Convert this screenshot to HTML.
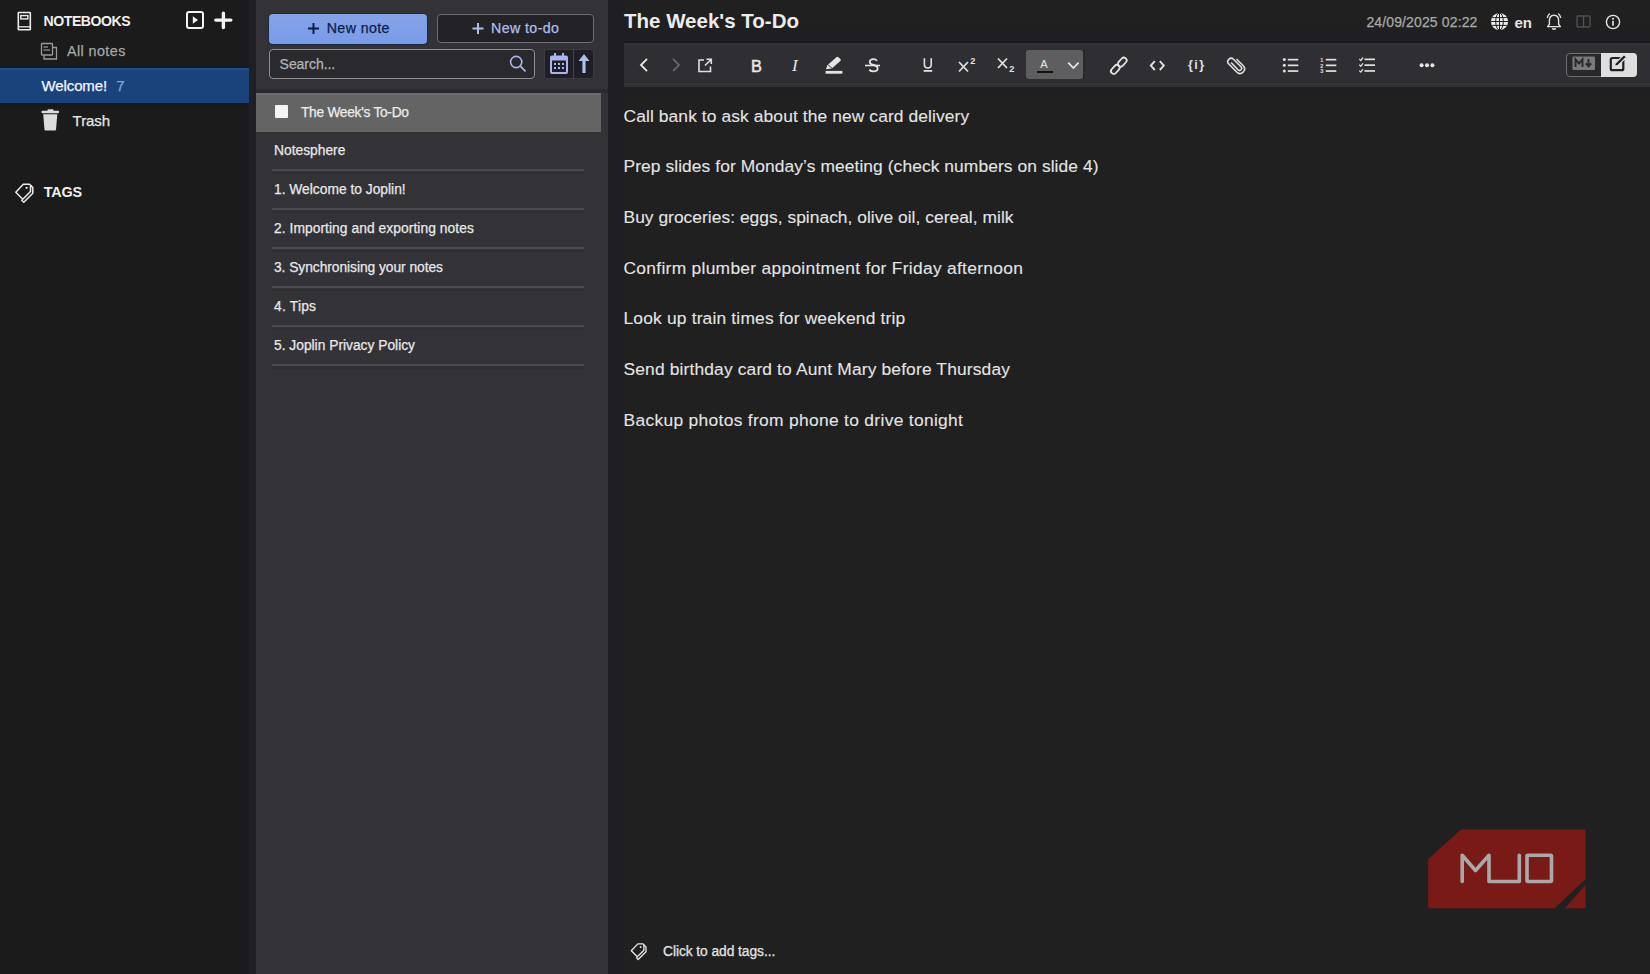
<!DOCTYPE html>
<html><head><meta charset="utf-8"><title>Joplin</title>
<style>
html,body{margin:0;padding:0;width:1650px;height:974px;overflow:hidden;background:#202020;}
body{position:relative;font-family:'Liberation Sans',sans-serif;}
.t{position:absolute;white-space:nowrap;line-height:1;}
.r{position:absolute;display:block;}
</style></head><body>
<div class="r" style="left:0px;top:0px;width:240px;height:974px;background:#1b1b1b;"></div>
<div class="r" style="left:240px;top:0px;width:9px;height:974px;background:#1b1a1f;"></div>
<div class="r" style="left:249px;top:0px;width:7px;height:974px;background:#201f24;"></div>
<div class="r" style="left:256px;top:0px;width:352px;height:974px;background:#333237;"></div>
<div class="r" style="left:608px;top:0px;width:16px;height:974px;background:#1f1e23;"></div>
<div class="r" style="left:624px;top:0px;width:1026px;height:974px;background:#202020;"></div>
<div class="r" style="left:624px;top:22px;width:1026px;height:19px;background:linear-gradient(#202020,#1f1e23);"></div>
<svg class="r" style="left:16px;top:11px;" width="16" height="20" viewBox="0 0 16 20"><rect x="2.3" y="1.5" width="12" height="17.3" rx="0.6" fill="none" stroke="#ececec" stroke-width="1.6"/><rect x="4.8" y="4.6" width="7" height="3.3" fill="none" stroke="#ececec" stroke-width="1.4"/><line x1="2.5" y1="15.8" x2="14" y2="15.8" stroke="#ececec" stroke-width="1.3"/></svg>
<div class="t" style="left:43.60px;top:13.66px;font-size:14.1px;color:#f0f0f0;font-weight:700;letter-spacing:-0.48px;font-family:'Liberation Sans', sans-serif;">NOTEBOOKS</div>
<svg class="r" style="left:185px;top:10px;" width="20" height="20" viewBox="0 0 20 20"><rect x="2" y="2" width="16" height="16" rx="2" fill="none" stroke="#f2f2f2" stroke-width="2"/><path d="M7.8 6.2 L13 10 L7.8 13.8 Z" fill="#f2f2f2"/></svg>
<svg class="r" style="left:213px;top:10px;" width="20" height="20" viewBox="0 0 20 20"><path d="M10.4 3.3 V17.6 M2.8 10.1 H17.8" stroke="#f4f4f4" stroke-width="3.4" stroke-linecap="round"/></svg>
<svg class="r" style="left:40px;top:42px;" width="20" height="19" viewBox="0 0 20 19"><rect x="1.5" y="1.5" width="11" height="11.5" rx="0.5" fill="none" stroke="#9a9a9a" stroke-width="1.3"/><path d="M4 13.5 V17 H16.5 V5.5 H13" fill="none" stroke="#9a9a9a" stroke-width="1.3"/><line x1="3.5" y1="5" x2="8" y2="5" stroke="#9a9a9a" stroke-width="1.2"/><line x1="3.5" y1="8" x2="10" y2="8" stroke="#9a9a9a" stroke-width="1.2"/></svg>
<div class="t" style="left:67.00px;top:44.40px;font-size:14.3px;color:#a8a8a8;font-weight:400;letter-spacing:0.432px;font-family:'Liberation Sans', sans-serif;-webkit-text-stroke:0.25px currentColor">All notes</div>
<div class="r" style="left:0px;top:65px;width:249px;height:3px;background:#16191d;"></div>
<div class="r" style="left:0px;top:103px;width:249px;height:4px;background:#161819;"></div>
<div class="r" style="left:0px;top:68px;width:249px;height:35px;background:#1b437b;"></div>
<div class="r" style="left:0px;top:68px;width:249px;height:2px;background:#22508a;"></div>
<div class="t" style="left:41.60px;top:78.30px;font-size:15px;color:#f2f6ff;font-weight:400;letter-spacing:-0.132px;font-family:'Liberation Sans', sans-serif;-webkit-text-stroke:0.25px currentColor">Welcome!</div>
<div class="t" style="left:116.30px;top:78.30px;font-size:15px;color:#7ea3d8;font-weight:400;letter-spacing:0px;font-family:'Liberation Sans', sans-serif;-webkit-text-stroke:0.25px currentColor">7</div>
<svg class="r" style="left:40px;top:108px;" width="21" height="24" viewBox="0 0 21 24"><rect x="1.5" y="2.8" width="17.5" height="2.4" rx="1" fill="#dcdcdc"/><rect x="7.5" y="1.2" width="6" height="2.5" rx="1" fill="#dcdcdc"/><path d="M3.2 6.3 H17.3 L16 21.8 Q15.9 22.6 15 22.6 H5.5 Q4.6 22.6 4.5 21.8 Z" fill="#dcdcdc"/></svg>
<div class="t" style="left:72.60px;top:113.10px;font-size:15px;color:#e6e6e6;font-weight:400;letter-spacing:-0.074px;font-family:'Liberation Sans', sans-serif;-webkit-text-stroke:0.25px currentColor">Trash</div>
<svg class="r" style="left:13px;top:182px;" width="22" height="22" viewBox="0 0 22 22"><g fill="none" stroke="#ececec" stroke-width="1.5" stroke-linejoin="round"><path d="M10.3 2.2 H16.5 L17.5 3.2 V9.5 L9.8 17.2 L2.8 10.2 Z"/><path d="M17.6 3.4 L19.8 5.6 V11.2 L10.8 20.2 L8.3 17.8"/></g><circle cx="13.6" cy="5.8" r="1.1" fill="#ececec"/></svg>
<div class="t" style="left:43.80px;top:185.41px;font-size:14.4px;color:#f0f0f0;font-weight:700;letter-spacing:-0.235px;font-family:'Liberation Sans', sans-serif;">TAGS</div>
<div class="r" style="left:269px;top:14px;width:158px;height:30px;background:linear-gradient(#86a2e6,#789cea);border-radius:4px;box-shadow:0 0 0 1px #1c2740"></div>
<svg class="r" style="left:307px;top:22px;" width="13" height="13" viewBox="0 0 13 13"><path d="M6.5 1 V12 M1 6.5 H12" stroke="#0e1d47" stroke-width="2"/></svg>
<div class="t" style="left:326.70px;top:21.38px;font-size:14.2px;color:#0e1d47;font-weight:400;letter-spacing:0.409px;font-family:'Liberation Sans', sans-serif;-webkit-text-stroke:0.25px currentColor">New note</div>
<div class="r" style="left:437px;top:14px;width:157px;height:29px;background:#232227;border:1px solid #6d6c72;box-sizing:border-box;border-radius:4px"></div>
<svg class="r" style="left:471px;top:22px;" width="14" height="13" viewBox="0 0 14 13"><path d="M7 1 V12 M1.5 6.5 H12.5" stroke="#aebfec" stroke-width="2"/></svg>
<div class="t" style="left:491.00px;top:21.38px;font-size:14.2px;color:#aebfec;font-weight:400;letter-spacing:0.416px;font-family:'Liberation Sans', sans-serif;-webkit-text-stroke:0.25px currentColor">New to-do</div>
<div class="r" style="left:269px;top:49px;width:266px;height:30px;background:#2a292e;border:1.5px solid #8f8e93;box-sizing:border-box;border-radius:4px"></div>
<div class="t" style="left:279.60px;top:57.35px;font-size:14px;color:#b4b4b4;font-weight:400;letter-spacing:-0.054px;font-family:'Liberation Sans', sans-serif;-webkit-text-stroke:0.25px currentColor">Search...</div>
<svg class="r" style="left:508px;top:54px;" width="20" height="20" viewBox="0 0 20 20"><circle cx="8.2" cy="8" r="5.6" fill="none" stroke="#a9b7ea" stroke-width="1.6"/><path d="M12.3 12.2 L17 16.8" stroke="#a9b7ea" stroke-width="1.8" stroke-linecap="round"/></svg>
<div class="r" style="left:544px;top:49px;width:50px;height:30px;background:#1f1e26;border:1px solid #3b3a40;box-sizing:border-box;border-radius:3px"></div>
<div class="r" style="left:573px;top:49px;width:1px;height:30px;background:#45444a;"></div>
<svg class="r" style="left:549px;top:52px;" width="20" height="23" viewBox="0 0 20 23"><rect x="2" y="4.5" width="16" height="16.5" rx="1" fill="none" stroke="#a9b5f0" stroke-width="2"/><rect x="2" y="4.5" width="16" height="4" fill="#a9b5f0"/><rect x="5" y="1" width="2" height="5" fill="#a9b5f0"/><rect x="13" y="1" width="2" height="5" fill="#a9b5f0"/><g fill="#a9b5f0"><rect x="5" y="11" width="2" height="2"/><rect x="9" y="11" width="2" height="2"/><rect x="13" y="11" width="2" height="2"/><rect x="5" y="15" width="2" height="2"/><rect x="9" y="15" width="2" height="2"/><rect x="13" y="15" width="2" height="2"/></g></svg>
<svg class="r" style="left:577px;top:53px;" width="14" height="21" viewBox="0 0 14 21"><path d="M7 1 L12.5 8 H8.6 V20 H5.4 V8 H1.5 Z" fill="#a9c0ec"/></svg>
<div class="r" style="left:256px;top:89px;width:352px;height:4px;background:#2b2a2f;"></div>
<div class="r" style="left:256px;top:93px;width:345px;height:39px;background:#646464;"></div>
<div class="r" style="left:256px;top:93px;width:345px;height:2px;background:#6c6c70;"></div>
<div class="r" style="left:274.5px;top:104.5px;width:13.5px;height:13.5px;background:#f4f4f4;border-radius:1px"></div>
<div class="t" style="left:301.00px;top:105.52px;font-size:13.8px;color:#ececec;font-weight:400;letter-spacing:-0.303px;font-family:'Liberation Sans', sans-serif;-webkit-text-stroke:0.25px currentColor">The Week's To-Do</div>
<div class="t" style="left:274.00px;top:144.32px;font-size:13.8px;color:#e8e8e8;font-weight:400;letter-spacing:0.006px;font-family:'Liberation Sans', sans-serif;-webkit-text-stroke:0.25px currentColor">Notesphere</div>
<div class="r" style="left:272px;top:169.4px;width:312px;height:1.8px;background:#4b4a50;"></div>
<div class="r" style="left:272px;top:171.5px;width:312px;height:2.5px;background:#2f2e33;"></div>
<div class="t" style="left:274.00px;top:183.32px;font-size:13.8px;color:#e8e8e8;font-weight:400;letter-spacing:0.002px;font-family:'Liberation Sans', sans-serif;-webkit-text-stroke:0.25px currentColor">1. Welcome to Joplin!</div>
<div class="r" style="left:272px;top:208.4px;width:312px;height:1.8px;background:#4b4a50;"></div>
<div class="r" style="left:272px;top:210.5px;width:312px;height:2.5px;background:#2f2e33;"></div>
<div class="t" style="left:274.00px;top:222.32px;font-size:13.8px;color:#e8e8e8;font-weight:400;letter-spacing:0.062px;font-family:'Liberation Sans', sans-serif;-webkit-text-stroke:0.25px currentColor">2. Importing and exporting notes</div>
<div class="r" style="left:272px;top:247.4px;width:312px;height:1.8px;background:#4b4a50;"></div>
<div class="r" style="left:272px;top:249.5px;width:312px;height:2.5px;background:#2f2e33;"></div>
<div class="t" style="left:274.00px;top:261.32px;font-size:13.8px;color:#e8e8e8;font-weight:400;letter-spacing:-0.049px;font-family:'Liberation Sans', sans-serif;-webkit-text-stroke:0.25px currentColor">3. Synchronising your notes</div>
<div class="r" style="left:272px;top:286.4px;width:312px;height:1.8px;background:#4b4a50;"></div>
<div class="r" style="left:272px;top:288.5px;width:312px;height:2.5px;background:#2f2e33;"></div>
<div class="t" style="left:274.00px;top:300.32px;font-size:13.8px;color:#e8e8e8;font-weight:400;letter-spacing:0.224px;font-family:'Liberation Sans', sans-serif;-webkit-text-stroke:0.25px currentColor">4. Tips</div>
<div class="r" style="left:272px;top:325.4px;width:312px;height:1.8px;background:#4b4a50;"></div>
<div class="r" style="left:272px;top:327.5px;width:312px;height:2.5px;background:#2f2e33;"></div>
<div class="t" style="left:274.00px;top:339.32px;font-size:13.8px;color:#e8e8e8;font-weight:400;letter-spacing:-0.004px;font-family:'Liberation Sans', sans-serif;-webkit-text-stroke:0.25px currentColor">5. Joplin Privacy Policy</div>
<div class="r" style="left:272px;top:364.4px;width:312px;height:1.8px;background:#4b4a50;"></div>
<div class="r" style="left:272px;top:366.5px;width:312px;height:2.5px;background:#2f2e33;"></div>
<div class="t" style="left:624.00px;top:11.15px;font-size:20.5px;color:#ececec;font-weight:700;letter-spacing:0px;font-family:'Liberation Sans', sans-serif;">The Week's To-Do</div>
<div class="t" style="left:1366.40px;top:14.55px;font-size:14px;color:#a9a9a9;font-weight:400;letter-spacing:0.133px;font-family:'Liberation Sans', sans-serif;-webkit-text-stroke:0.25px currentColor">24/09/2025 02:22</div>
<svg class="r" style="left:1490px;top:12px;" width="19" height="19" viewBox="0 0 19 19"><circle cx="9.5" cy="9.5" r="8.6" fill="#ececec"/><g stroke="#202020" stroke-width="1" fill="none"><ellipse cx="9.5" cy="9.5" rx="3.8" ry="8.6"/><line x1="9.5" y1="1" x2="9.5" y2="18"/><line x1="1" y1="9.5" x2="18" y2="9.5"/><path d="M2.2 5.6 H16.8 M2.2 13.4 H16.8"/></g></svg>
<div class="t" style="left:1514.50px;top:14.60px;font-size:15px;color:#e4e4e4;font-weight:700;letter-spacing:-0.016px;font-family:'Liberation Sans', sans-serif;">en</div>
<svg class="r" style="left:1545px;top:12px;" width="18" height="19" viewBox="0 0 18 19"><path d="M9 3.2 C5.6 3.2 4.4 5.8 4.4 8.6 V12.3 L2.6 14.6 H15.4 L13.6 12.3 V8.6 C13.6 5.8 12.4 3.2 9 3.2 Z" fill="none" stroke="#e0e0e0" stroke-width="1.4" stroke-linejoin="round"/><path d="M7.2 16.2 Q9 18.2 10.8 16.2" fill="none" stroke="#e0e0e0" stroke-width="1.4"/><path d="M2.2 6 Q2.8 3 4.8 1.5 M15.8 6 Q15.2 3 13.2 1.5" fill="none" stroke="#e0e0e0" stroke-width="1.3"/></svg>
<svg class="r" style="left:1576px;top:15px;" width="15" height="13" viewBox="0 0 15 13"><rect x="1" y="1" width="13" height="11" rx="1" fill="none" stroke="#505055" stroke-width="1.4"/><line x1="7.5" y1="1" x2="7.5" y2="12" stroke="#505055" stroke-width="1.4"/></svg>
<svg class="r" style="left:1605px;top:14px;" width="16" height="16" viewBox="0 0 16 16"><circle cx="8" cy="8" r="6.6" fill="none" stroke="#e6e6e6" stroke-width="1.4"/><rect x="7.2" y="6.8" width="1.6" height="5" fill="#e6e6e6"/><circle cx="8" cy="4.8" r="1" fill="#e6e6e6"/></svg>
<div class="r" style="left:624px;top:41px;width:1026px;height:2px;background:#1b1a1f;"></div>
<div class="r" style="left:624px;top:43px;width:1026px;height:44px;background:#2f2e33;"></div>
<div class="r" style="left:624px;top:43px;width:1026px;height:2px;background:#333237;"></div>
<div class="r" style="left:624px;top:87px;width:1026px;height:10px;background:linear-gradient(#1f1e23,#202020);"></div>
<div class="r" style="left:624px;top:81px;width:1026px;height:2px;background:#2c2b30;"></div>
<div class="r" style="left:624px;top:83px;width:1026px;height:2px;background:#343338;"></div>
<svg class="r" style="left:638px;top:57px;" width="12" height="16" viewBox="0 0 12 16"><path d="M9 1.8 L3 8 L9 14.2" fill="none" stroke="#e4e4e4" stroke-width="1.9"/></svg>
<svg class="r" style="left:670px;top:57px;" width="12" height="16" viewBox="0 0 12 16"><path d="M3 1.8 L9 8 L3 14.2" fill="none" stroke="#66666a" stroke-width="1.9"/></svg>
<svg class="r" style="left:696px;top:57px;" width="18" height="17" viewBox="0 0 18 17"><path d="M8 3 H3 V14.5 H14.5 V9.5" fill="none" stroke="#e0e0e0" stroke-width="1.6"/><path d="M9 8.5 L15 2.5 M10.5 2.3 H15.3 V7" fill="none" stroke="#e0e0e0" stroke-width="1.6"/></svg>
<div class="t" style="left:751.00px;top:57.50px;font-size:16.3px;color:#e6e6e6;font-weight:400;letter-spacing:0.925px;font-family:'Liberation Sans', sans-serif;-webkit-text-stroke:0.5px #e6e6e6">B</div>
<div class="t" style="left:792.00px;top:57.11px;font-size:17px;color:#e6e6e6;font-weight:400;letter-spacing:0px;font-family:'Liberation Serif', serif;font-style:italic">I</div>
<svg class="r" style="left:824px;top:56px;" width="20" height="19" viewBox="0 0 20 19"><path d="M1.9 13.2 L3.4 9.2 L12.3 1.2 Q13.4 0.3 14.5 1.2 L16.4 2.9 Q17.3 4 16.4 5 L7.8 12.6 Z" fill="#e4e4e4"/><path d="M4.2 9 L8 12.2" stroke="#2f2e33" stroke-width="0.9"/><rect x="1.6" y="14.9" width="16.8" height="2.8" fill="#e4e4e4"/></svg>
<svg class="r" style="left:863px;top:57px;" width="18" height="16" viewBox="0 0 18 16"><path d="M14 3.8 Q12.8 2.2 10.6 2.2 Q6.8 2.2 6.8 5 Q6.8 7.3 10.6 8 Q14.6 8.9 14.6 11.5 Q14.6 14.4 10.6 14.4 Q7.6 14.4 6.3 12.6" fill="none" stroke="#e4e4e4" stroke-width="1.8"/><line x1="2" y1="8.5" x2="17" y2="8.5" stroke="#e4e4e4" stroke-width="1.6"/></svg>
<svg class="r" style="left:920px;top:57px;" width="15" height="16" viewBox="0 0 15 16"><path d="M4.4 1.3 V7.5 Q4.4 11 7.8 11 Q11.2 11 11.2 7.5 V1.3" fill="none" stroke="#e0e0e0" stroke-width="1.6"/><rect x="3.6" y="13" width="8.6" height="1.8" fill="#e0e0e0"/></svg>
<svg class="r" style="left:957px;top:56px;" width="20" height="18" viewBox="0 0 20 18"><path d="M2 6 L11 15.5 M11 6 L2 15.5" stroke="#e0e0e0" stroke-width="1.8"/><text x="13.2" y="8.4" font-size="9.2" font-family="Liberation Sans" font-weight="700" fill="#e0e0e0">2</text></svg>
<svg class="r" style="left:996px;top:56px;" width="20" height="18" viewBox="0 0 20 18"><path d="M2 2.5 L11 12 M11 2.5 L2 12" stroke="#e0e0e0" stroke-width="1.8"/><text x="13.2" y="16" font-size="9.2" font-family="Liberation Sans" font-weight="700" fill="#e0e0e0">2</text></svg>
<div class="r" style="left:1025.5px;top:50px;width:57px;height:29px;background:#5e5e60;border-radius:3px"></div>
<div class="t" style="left:1040.30px;top:59.12px;font-size:11.2px;color:#e8e8e8;font-weight:400;letter-spacing:0px;font-family:'Liberation Sans', sans-serif;">A</div>
<div class="r" style="left:1037px;top:71px;width:16px;height:2px;background:#111111;"></div>
<div class="r" style="left:1083px;top:50px;width:2px;height:29px;background:#28272c;"></div>
<svg class="r" style="left:1065px;top:60px;" width="16" height="11" viewBox="0 0 16 11"><path d="M3.2 2.6 L8.4 8 L13.6 2.6" fill="none" stroke="#e6e6e6" stroke-width="1.8"/></svg>
<svg class="r" style="left:1108px;top:55px;" width="21" height="21" viewBox="0 0 21 21"><g fill="none" stroke="#e4e4e4" stroke-width="1.8"><rect x="9.2" y="4.3" width="10.2" height="5.6" rx="2.8" transform="rotate(-48 14.3 7.1)"/><rect x="2.2" y="11.6" width="10.2" height="5.6" rx="2.8" transform="rotate(-48 7.3 14.4)"/></g></svg>
<svg class="r" style="left:1148px;top:58px;" width="19" height="14" viewBox="0 0 19 14"><path d="M6.8 3.2 L2.8 7.6 L6.8 12 M11.8 3.2 L15.8 7.6 L11.8 12" fill="none" stroke="#e0e0e0" stroke-width="1.9"/></svg>
<div class="t" style="left:1188.00px;top:59.02px;font-size:12.5px;color:#e0e0e0;font-weight:700;letter-spacing:1.398px;font-family:'Liberation Sans', sans-serif;">{i}</div>
<svg class="r" style="left:1225px;top:55px;" width="21" height="22" viewBox="0 0 21 22"><g transform="translate(21,0) scale(-1,1)"><path d="M14.5 8 L8 14.8 Q6.5 16.3 5 14.8 Q3.6 13.3 5 11.8 L12.5 4.3 Q14.8 2 17.2 4.3 Q19.5 6.7 17.2 9 L9.3 17 Q6 20.3 2.8 17 Q-0.3 13.8 3 10.5 L9 4.5" fill="none" stroke="#e0e0e0" stroke-width="1.6" stroke-linecap="round"/></g></svg>
<svg class="r" style="left:1282px;top:57px;" width="18" height="17" viewBox="0 0 18 17"><g fill="#e0e0e0"><circle cx="2.3" cy="2.6" r="1.5"/><circle cx="2.3" cy="8.3" r="1.5"/><circle cx="2.3" cy="14" r="1.5"/><rect x="5.8" y="1.8" width="10.5" height="1.7"/><rect x="5.8" y="7.5" width="10.5" height="1.7"/><rect x="5.8" y="13.2" width="10.5" height="1.7"/></g></svg>
<svg class="r" style="left:1320px;top:57px;" width="18" height="17" viewBox="0 0 18 17"><g fill="#e0e0e0"><text x="0.3" y="5" font-size="5.5" font-family="Liberation Sans" font-weight="700">1</text><text x="0.3" y="10.6" font-size="5.5" font-family="Liberation Sans" font-weight="700">2</text><text x="0.3" y="16.3" font-size="5.5" font-family="Liberation Sans" font-weight="700">3</text><rect x="5.8" y="1.8" width="10.5" height="1.7"/><rect x="5.8" y="7.5" width="10.5" height="1.7"/><rect x="5.8" y="13.2" width="10.5" height="1.7"/></g></svg>
<svg class="r" style="left:1358px;top:56px;" width="20" height="18" viewBox="0 0 20 18"><g fill="none" stroke="#e0e0e0" stroke-width="1.3"><path d="M1.3 3 L2.8 4.5 L5 1.5"/><path d="M1.3 8.8 L2.8 10.3 L5 7.3"/><path d="M1.3 14.6 L2.8 16.1 L5 13.1"/></g><g fill="#e0e0e0"><rect x="6.5" y="2.5" width="10.5" height="1.7"/><rect x="6.5" y="8.3" width="10.5" height="1.7"/><rect x="6.5" y="14.1" width="10.5" height="1.7"/></g></svg>
<svg class="r" style="left:1418px;top:62px;" width="18" height="7" viewBox="0 0 18 7"><g fill="#e6e6e6"><circle cx="3.6" cy="3.2" r="2"/><circle cx="9" cy="3.2" r="2"/><circle cx="14.4" cy="3.2" r="2"/></g></svg>
<div class="r" style="left:1566px;top:53px;width:71px;height:24px;background:#28272c;border:1.2px solid #6f6e73;box-sizing:border-box;border-radius:4px"></div>
<div class="r" style="left:1601px;top:53px;width:36px;height:24px;background:#dfdfe0;border-radius:0 4px 4px 0"></div>
<svg class="r" style="left:1572px;top:56px;" width="24" height="15" viewBox="0 0 24 15"><rect x="0.5" y="0.5" width="22.5" height="13.5" rx="1" fill="#7a7a7c"/><path d="M3.5 11 V3.5 L7 7.5 L10.5 3.5 V11" fill="none" stroke="#2a2a2e" stroke-width="2"/><path d="M16.5 3 V10 M13.8 7.3 L16.5 10.3 L19.2 7.3" fill="none" stroke="#2a2a2e" stroke-width="2"/></svg>
<svg class="r" style="left:1608px;top:53px;" width="22" height="19" viewBox="0 0 22 19"><rect x="2.8" y="5" width="12.5" height="12.2" rx="1.5" fill="none" stroke="#202024" stroke-width="2.2"/><path d="M6.5 13.2 L7.2 10.2 L16 1.5 L18.6 4 L9.8 12.6 Z" fill="#202024" stroke="#dfdfe0" stroke-width="1.2"/></svg>
<!--BODY-->
<div class="t" style="left:623.50px;top:107.57px;font-size:17.4px;color:#e4e4e4;font-weight:400;letter-spacing:0.103px;font-family:'Liberation Sans', sans-serif;-webkit-text-stroke:0.1px currentColor">Call bank to ask about the new card delivery</div>
<div class="t" style="left:623.50px;top:158.24px;font-size:17.4px;color:#e4e4e4;font-weight:400;letter-spacing:0.079px;font-family:'Liberation Sans', sans-serif;-webkit-text-stroke:0.1px currentColor">Prep slides for Monday’s meeting (check numbers on slide 4)</div>
<div class="t" style="left:623.50px;top:208.91px;font-size:17.4px;color:#e4e4e4;font-weight:400;letter-spacing:0.027px;font-family:'Liberation Sans', sans-serif;-webkit-text-stroke:0.1px currentColor">Buy groceries: eggs, spinach, olive oil, cereal, milk</div>
<div class="t" style="left:623.50px;top:259.58px;font-size:17.4px;color:#e4e4e4;font-weight:400;letter-spacing:0.29px;font-family:'Liberation Sans', sans-serif;-webkit-text-stroke:0.1px currentColor">Confirm plumber appointment for Friday afternoon</div>
<div class="t" style="left:623.50px;top:310.25px;font-size:17.4px;color:#e4e4e4;font-weight:400;letter-spacing:0.177px;font-family:'Liberation Sans', sans-serif;-webkit-text-stroke:0.1px currentColor">Look up train times for weekend trip</div>
<div class="t" style="left:623.50px;top:360.92px;font-size:17.4px;color:#e4e4e4;font-weight:400;letter-spacing:0.148px;font-family:'Liberation Sans', sans-serif;-webkit-text-stroke:0.1px currentColor">Send birthday card to Aunt Mary before Thursday</div>
<div class="t" style="left:623.50px;top:411.59px;font-size:17.4px;color:#e4e4e4;font-weight:400;letter-spacing:0.316px;font-family:'Liberation Sans', sans-serif;-webkit-text-stroke:0.1px currentColor">Backup photos from phone to drive tonight</div>
<svg class="r" style="left:629px;top:942px;" width="19" height="19" viewBox="0 0 19 19"><g fill="none" stroke="#e8e8e8" stroke-width="1.3" stroke-linejoin="round"><path d="M8.8 1.9 H14 L14.9 2.8 V8.2 L8.3 14.8 L2.3 8.8 Z"/><path d="M15 3 L17 5 V9.7 L9.2 17.5 L7.1 15.4"/></g><circle cx="11.6" cy="5" r="0.95" fill="#e8e8e8"/></svg>
<div class="t" style="left:663.00px;top:944.52px;font-size:13.8px;color:#e4e4e4;font-weight:400;letter-spacing:-0.063px;font-family:'Liberation Sans', sans-serif;-webkit-text-stroke:0.25px currentColor">Click to add tags...</div>
<svg class="r" style="left:1426px;top:827px;" width="162" height="84" viewBox="0 0 162 84"><path d="M35 2.5 H159.5 V52.2 L128.5 81.2 H2.2 V32 Z" fill="#7a1a17"/><path d="M159.5 57.8 V81.2 H139 Z" fill="#7a1a17"/><g fill="none" stroke="#a9a9a9" stroke-width="3.6" stroke-linejoin="round" stroke-linecap="round"><path d="M36.2 54.5 V28.3 L49.5 43.5 L63 28.3 V54.5 H93.3 V28.3"/><rect x="101" y="28.3" width="24.5" height="26.2" rx="1"/></g></svg>
</body></html>
